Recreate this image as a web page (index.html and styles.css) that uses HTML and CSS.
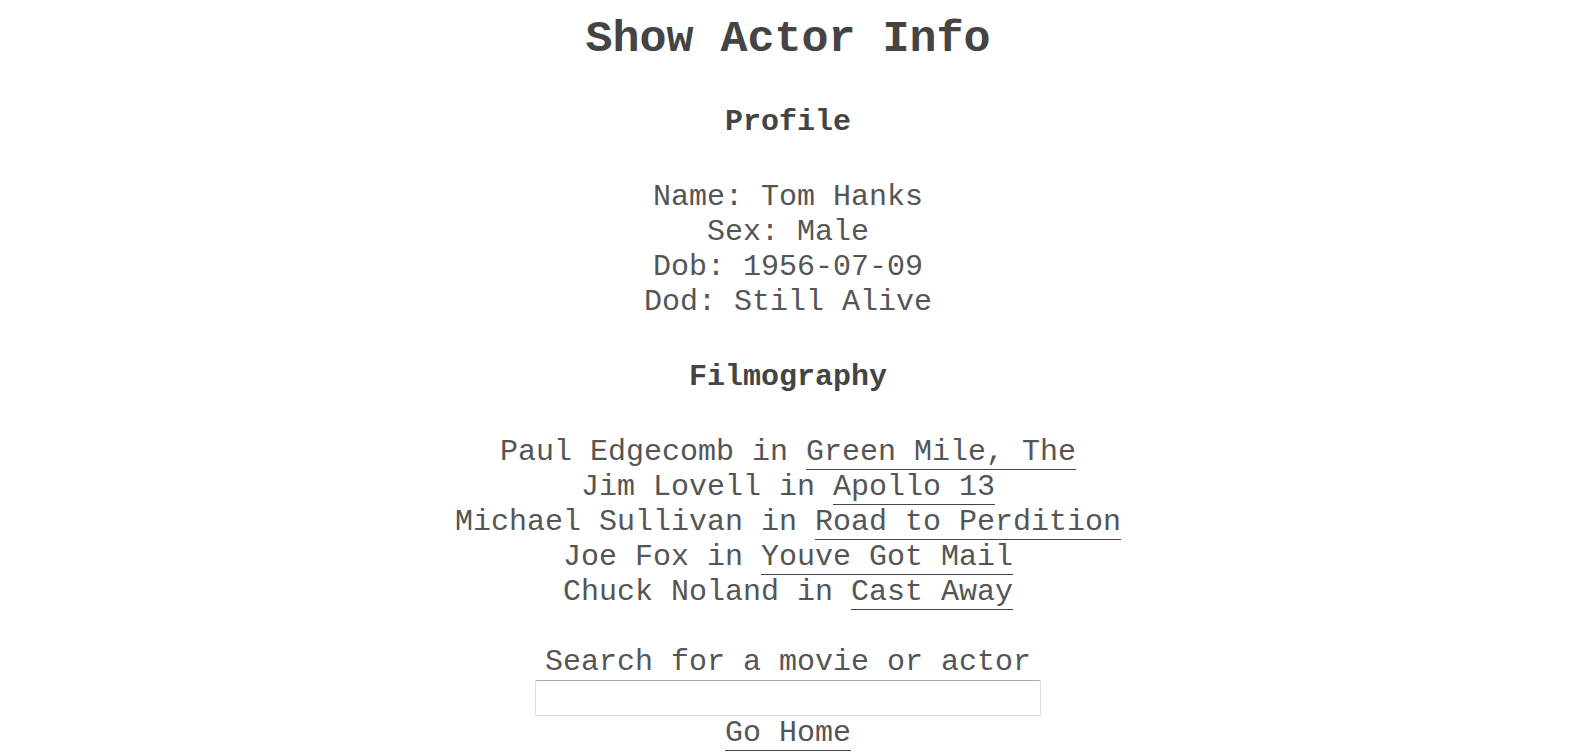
FILE: index.html
```html
<!DOCTYPE html>
<html>
<head>
<meta charset="utf-8">
<title>Show Actor Info</title>
<link rel="stylesheet" href="styles.css">
</head>
<body>
<main class="page">
  <h1 class="title">Show Actor Info</h1>
  <h3 class="section-title">Profile</h3>
  <div class="info">
    <div>Name: Tom Hanks</div>
    <div>Sex: Male</div>
    <div>Dob: 1956-07-09</div>
    <div>Dod: Still Alive</div>
  </div>
  <h3 class="section-title">Filmography</h3>
  <div class="info">
    <div>Paul Edgecomb in <a class="link" href="#">Green Mile, The</a></div>
    <div>Jim Lovell in <a class="link" href="#">Apollo 13</a></div>
    <div>Michael Sullivan in <a class="link" href="#">Road to Perdition</a></div>
    <div>Joe Fox in <a class="link" href="#">Youve Got Mail</a></div>
    <div>Chuck Noland in <a class="link" href="#">Cast Away</a></div>
  </div>
  <form class="search">
    <label class="search-label" for="q">Search for a movie or actor</label>
    <input class="search-input" id="q" type="text">
  </form>
  <a class="link home" href="#">Go Home</a>
</main>
</body>
</html>
```

FILE: styles.css
```css
html, body {
  margin: 0;
  padding: 0;
  background: #ffffff;
}

body {
  font-family: "Courier New", "Nimbus Mono PS", "Nimbus Mono L", "FreeMono", "Liberation Mono", monospace;
  color: #555555;
  font-size: 30px;
  line-height: 35px;
}

.page {
  display: flex;
  flex-direction: column;
  align-items: center;
  text-align: center;
  padding: 14px 6px 0 0;
}

.title {
  margin: 0;
  font-size: 45px;
  line-height: 51px;
  font-weight: bold;
  color: #444444;
}

.section-title {
  margin: 40px 0 40px;
  font-size: 30px;
  line-height: 35px;
  font-weight: bold;
  color: #444444;
}

.info {
  display: flex;
  flex-direction: column;
  align-items: center;
}

.link {
  color: #555555;
  text-decoration: none;
  border-bottom: 1px solid #444444;
}

.search {
  margin-top: 35px;
  display: flex;
  flex-direction: column;
  align-items: center;
}

.search-label {
  display: block;
}

.search-input {
  box-sizing: border-box;
  width: 506px;
  height: 36px;
  margin: 0;
  border: 1px solid #dcdcdc;
  border-top-color: #a9a9a9;
  border-radius: 2px;
  font-family: inherit;
  font-size: 16px;
}

.home {
  display: inline-block;
  line-height: 35px;
  height: 34px;
}
```
